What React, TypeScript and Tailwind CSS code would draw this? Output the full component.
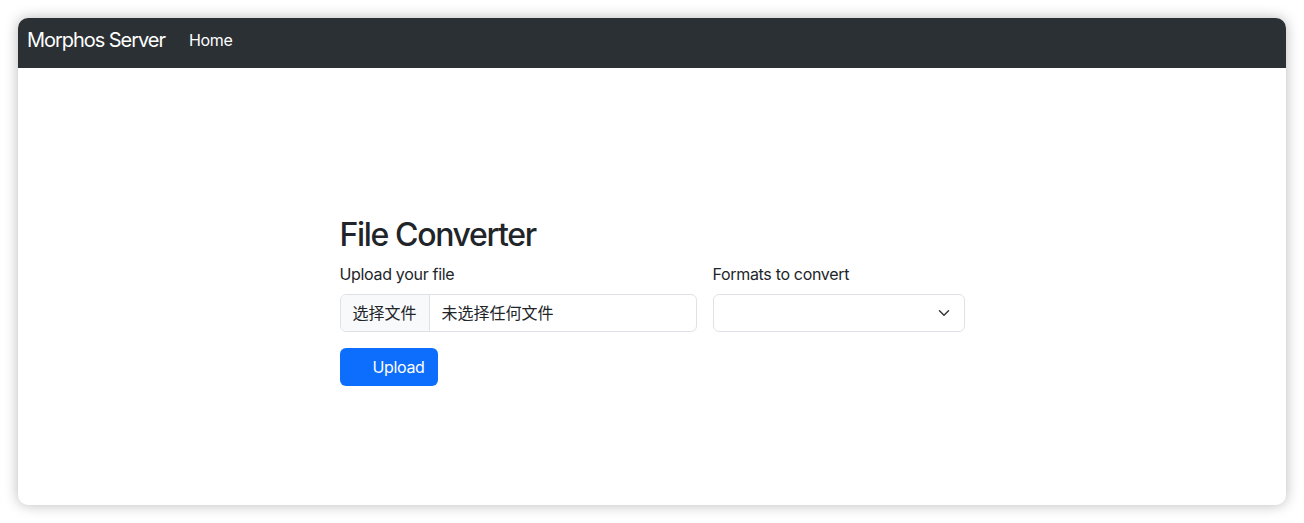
export default function App() {
  return (
    <div
      className="h-[523px] w-[1304px] bg-white p-[18px] pb-[18px]"
      style={{ fontFamily: 'Inter, "Noto Sans CJK SC", sans-serif' }}
    >
      <div className="flex h-[487px] flex-col overflow-hidden rounded-[10px] bg-white shadow-[0_0_14px_rgba(0,0,0,0.28)]">
        <nav className="flex h-[50px] items-center bg-[#2b3035] px-[9px] pb-[6px]">
          <span className="mr-4 text-[20px] tracking-[-0.052em] text-white">Morphos Server</span>
          <a className="px-2 text-[16px] tracking-[-0.02em] text-white">Home</a>
        </nav>

        <main className="flex flex-1 justify-center pt-[148px]">
          <div className="w-[625px] text-[#212529] tracking-[-0.02em]">
            <h2 className="mb-2 text-[32px] leading-[1.2] font-medium tracking-[-0.042em]">
              File Converter
            </h2>
            <div className="flex gap-4">
              <div className="w-[357px]">
                <label className="mb-2 block text-[16px] leading-6">Upload your file</label>
                <div className="flex h-[38px] overflow-hidden rounded-[6px] border border-[#dee2e6] text-[16px] tracking-normal">
                  <span className="flex items-center border-r border-[#dee2e6] bg-[#f8f9fa] px-3">
                    选择文件
                  </span>
                  <span className="flex items-center px-3">未选择任何文件</span>
                </div>
              </div>
              <div className="w-[252px]">
                <label className="mb-2 block text-[16px] leading-6">Formats to convert</label>
                <div className="flex h-[38px] items-center justify-end rounded-[6px] border border-[#dee2e6] pr-3">
                  <svg width="16" height="12" viewBox="0 0 16 16" fill="none">
                    <path
                      d="m2 5 6 6 6-6"
                      stroke="#343a40"
                      strokeWidth="2"
                      strokeLinecap="round"
                      strokeLinejoin="round"
                    />
                  </svg>
                </div>
              </div>
            </div>
            <button className="mt-4 h-[38px] w-[98px] rounded-[6px] bg-[#0d6efd] pl-[20px] text-[16px] text-white">
              Upload
            </button>
          </div>
        </main>
      </div>
    </div>
  );
}
